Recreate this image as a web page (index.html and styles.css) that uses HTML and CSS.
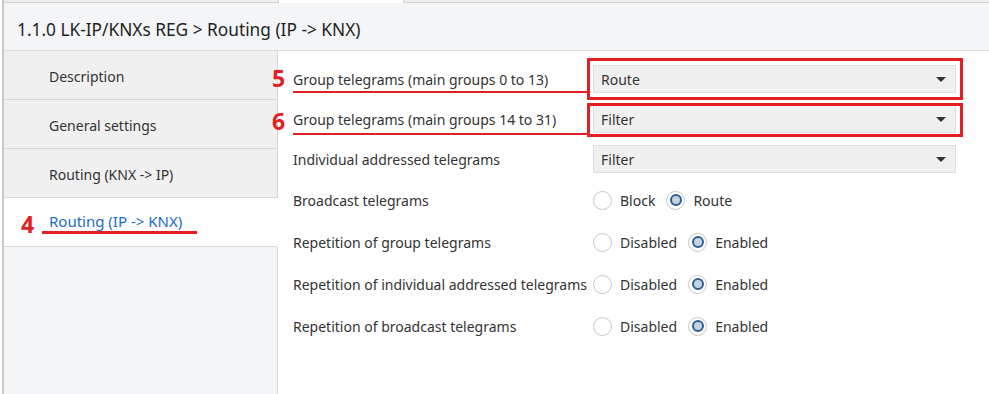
FILE: index.html
```html
<!DOCTYPE html>
<html lang="en">
<head>
    <meta charset="UTF-8">
    <title>Routing (IP -> KNX)</title>
    <link rel="stylesheet" href="styles.css">
</head>
<body>
    <div class="window">
        <div class="tabstrip">
            <div class="strip-left"></div>
            <div class="strip-gap"></div>
            <div class="strip-right"></div>
        </div>
        <div class="title">1.1.0 LK-IP/KNXs REG &gt; Routing (IP -&gt; KNX)</div>
        <div class="main">
            <nav class="sidebar">
                <div class="nav-item">Description</div>
                <div class="nav-item">General settings</div>
                <div class="nav-item">Routing (KNX -&gt; IP)</div>
                <div class="nav-item active">
                    <span class="mark mark-4">4</span>
                    Routing (IP -&gt; KNX)
                </div>
                <div class="nav-rest"></div>
            </nav>
            <section class="params">
                <div class="row">
                    <div class="label marked marked-5"><span class="mark">5</span>Group telegrams (main groups 0 to 13)</div>
                    <div class="select boxed boxed-5"><span>Route</span><span class="caret"></span></div>
                </div>
                <div class="row">
                    <div class="label marked marked-6"><span class="mark mark-6">6</span>Group telegrams (main groups 14 to 31)</div>
                    <div class="select boxed boxed-6"><span>Filter</span><span class="caret"></span></div>
                </div>
                <div class="row">
                    <div class="label">Individual addressed telegrams</div>
                    <div class="select"><span>Filter</span><span class="caret"></span></div>
                </div>
                <div class="row radio-row">
                    <div class="label">Broadcast telegrams</div>
                    <div class="radio-group">
                        <div class="option"><span class="radio"></span>Block</div>
                        <div class="option"><span class="radio checked"></span>Route</div>
                    </div>
                </div>
                <div class="row radio-row">
                    <div class="label">Repetition of group telegrams</div>
                    <div class="radio-group">
                        <div class="option"><span class="radio"></span>Disabled</div>
                        <div class="option"><span class="radio checked"></span>Enabled</div>
                    </div>
                </div>
                <div class="row radio-row">
                    <div class="label">Repetition of individual addressed telegrams</div>
                    <div class="radio-group">
                        <div class="option"><span class="radio"></span>Disabled</div>
                        <div class="option"><span class="radio checked"></span>Enabled</div>
                    </div>
                </div>
                <div class="row radio-row">
                    <div class="label">Repetition of broadcast telegrams</div>
                    <div class="radio-group">
                        <div class="option"><span class="radio"></span>Disabled</div>
                        <div class="option"><span class="radio checked"></span>Enabled</div>
                    </div>
                </div>
            </section>
        </div>
    </div>
</body>
</html>
```

FILE: styles.css
```css
html, body {
    margin: 0;
    height: 100%;
}
body {
    padding-left: 2px;
    font-family: "Noto Sans", "Open Sans", sans-serif;
    font-size: 14px;
    color: #333;
    background-color: #fff;
    overflow: hidden;
}
.window {
    height: 394px;
    border-left: 2px solid #c9c9c9;
    display: flex;
    flex-direction: column;
}
.tabstrip {
    display: flex;
    height: 3px;
    flex: none;
}
.strip-left, .strip-right {
    background-color: #efefef;
    border-bottom: 1px solid #d2d2d2;
}
.strip-left {
    width: 274px;
}
.strip-gap {
    width: 124px;
    background-color: #fff;
    border-left: 1px solid #d2d2d2;
    border-right: 1px solid #d2d2d2;
}
.strip-right {
    flex: 1;
}
.title {
    flex: none;
    box-sizing: border-box;
    height: 48px;
    padding: 5px 0 0 13px;
    display: flex;
    align-items: center;
    background-color: #f4f5f7;
    border-bottom: 1px solid #dcdcdc;
    font-size: 17.3px;
    color: #1f1f1f;
}
.main {
    flex: 1;
    display: flex;
    min-height: 0;
}
.sidebar {
    width: 274px;
    flex: none;
    display: flex;
    flex-direction: column;
}
.nav-item {
    position: relative;
    box-sizing: border-box;
    height: 49px;
    padding: 2px 0 0 45px;
    display: flex;
    align-items: center;
    background-color: #f0f0f0;
    border-bottom: 1px solid #d9d9d9;
    border-right: 1px solid #d6d6d6;
}
.nav-item.active {
    padding: 0 0 2px 45px;
    background-color: #fff;
    border-right-color: #fff;
    font-size: 15px;
    color: #1b6ec2;
}
.nav-item.active::after {
    content: '';
    position: absolute;
    left: 38px;
    top: 33px;
    width: 155px;
    height: 3px;
    background-color: #e31e24;
}
.nav-rest {
    flex: 1;
    background-color: #f4f5f7;
    border-right: 1px solid #d6d6d6;
}
.mark {
    position: absolute;
    left: -21px;
    top: -3px;
    font-size: 23px;
    font-weight: 700;
    line-height: 1;
    color: #e31e24;
}
.mark-6 {
    top: 0;
}
.mark-4 {
    left: 17px;
    top: 15px;
}
.params {
    flex: 1;
    padding: 8px 0 0 15px;
}
.row {
    height: 40px;
    display: flex;
    align-items: center;
}
.radio-row {
    height: 42px;
}
.label {
    position: relative;
    width: 300px;
    flex: none;
    white-space: nowrap;
}
.marked::after {
    content: '';
    position: absolute;
    left: 0;
    right: 5px;
    height: 2px;
    background-color: #e31e24;
}
.marked-5::after {
    top: 21px;
}
.marked-6::after {
    top: 23px;
}
.select {
    position: relative;
    box-sizing: border-box;
    width: 363px;
    height: 28px;
    padding: 0 9px 0 7px;
    display: flex;
    align-items: center;
    justify-content: space-between;
    background-color: #f0f0f0;
    border: 1px solid #dedede;
}
.caret {
    width: 0;
    height: 0;
    border-left: 5px solid transparent;
    border-right: 5px solid transparent;
    border-top: 5px solid #333;
}
.boxed::after {
    content: '';
    position: absolute;
    border: 3px solid #e31e24;
}
.boxed-5::after {
    top: -8px;
    bottom: -8px;
    left: -7px;
    right: -8px;
}
.boxed-6::after {
    top: -3px;
    bottom: -5px;
    left: -7px;
    right: -8px;
}
.radio-group {
    display: flex;
    align-items: center;
    gap: 11px;
}
.option {
    display: flex;
    align-items: center;
    gap: 8px;
}
.radio {
    box-sizing: border-box;
    width: 19px;
    height: 19px;
    border-radius: 50%;
    border: 1px solid #c8c8c8;
    background-color: #fff;
    display: grid;
    place-items: center;
}
.radio.checked::after {
    content: '';
    box-sizing: border-box;
    width: 12px;
    height: 12px;
    border-radius: 50%;
    border: 2px solid #2d5f94;
    background-color: #c5d3e1;
}
```
